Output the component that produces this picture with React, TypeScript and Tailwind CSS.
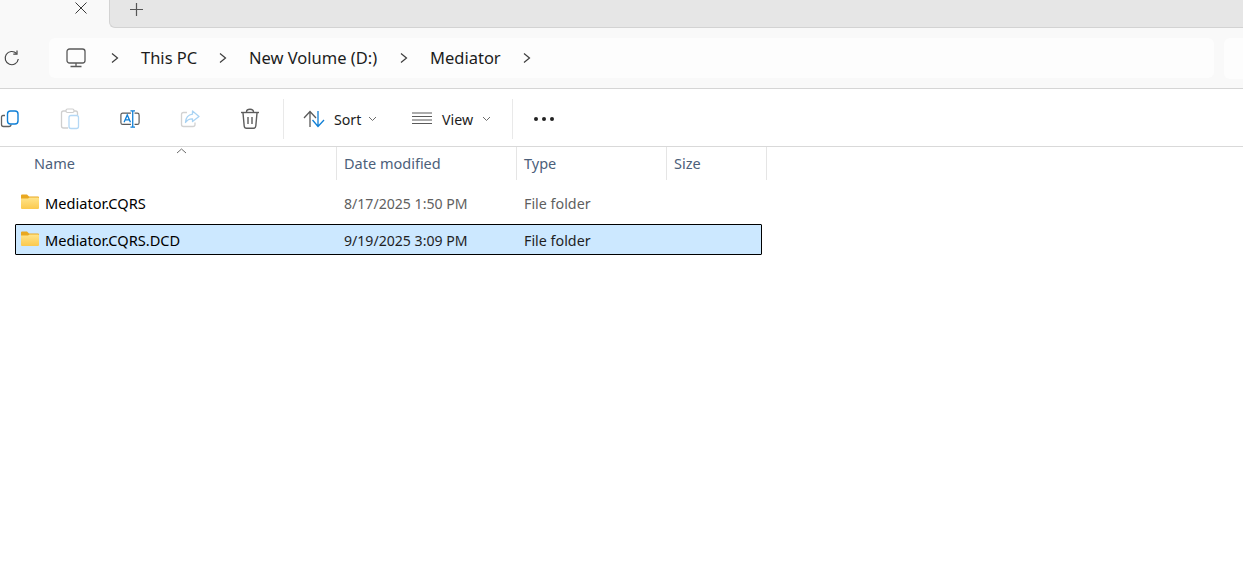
import type React from "react";

const FONT = "font-['Noto_Sans','Open_Sans',sans-serif]";

const Chevron: React.FC = () => (
  <svg width="10" height="12" viewBox="0 0 10 12" fill="none" stroke="#3c3c3c" strokeWidth="1.2">
    <path d="M2 1.5 L7.5 6 L2 10.5" />
  </svg>
);

const SmallCaret: React.FC = () => (
  <svg width="9" height="6" viewBox="0 0 9 6" fill="none" stroke="#6b6b6b" strokeWidth="1">
    <path d="M1 1 L4.5 4.5 L8 1" />
  </svg>
);

const FolderIcon: React.FC = () => (
  <svg width="20" height="16" viewBox="0 0 20 16">
    <defs>
      <linearGradient id="folderFront" x1="0" y1="0" x2="0" y2="1">
        <stop offset="0" stopColor="#ffe48a" />
        <stop offset="1" stopColor="#fbc94d" />
      </linearGradient>
    </defs>
    <path d="M1 1.5 Q1 .5 2 .5 H7 L9 2.5 H18 Q19 2.5 19 3.5 V6 H1 Z" fill="#e9a820" />
    <path d="M1 4.5 H8 L9.5 3.6 H18 Q19 3.6 19 4.6 V14 Q19 15 18 15 H2 Q1 15 1 14 Z" fill="url(#folderFront)" />
  </svg>
);

const CopyIcon: React.FC = () => (
  <svg width="20" height="20" viewBox="0 0 20 20" fill="none">
    <path d="M5 6.5 H3 Q1.5 6.5 1.5 8 V15.5 Q1.5 17.5 3.5 17.5 H9 Q11 17.5 11 15.5" stroke="#616161" strokeWidth="1.3" />
    <rect x="7.5" y="2" width="10.5" height="13" rx="3" stroke="#0f7fd6" strokeWidth="1.4" />
  </svg>
);

const PasteIcon: React.FC = () => (
  <svg width="20" height="22" viewBox="0 0 20 22" fill="none">
    <path d="M6 3 H3.5 Q1.5 3 1.5 5 V18 Q1.5 20 3.5 20 H8" stroke="#cfcfcf" strokeWidth="1.3" />
    <path d="M14 3 H15.5 Q17.5 3 17.5 5 V7" stroke="#cfcfcf" strokeWidth="1.3" />
    <rect x="6" y="1" width="8" height="3.5" rx="1.5" stroke="#cfcfcf" strokeWidth="1.2" />
    <rect x="9" y="7.5" width="9.5" height="13" rx="2" stroke="#b4d8f5" strokeWidth="1.3" />
  </svg>
);

const RenameIcon: React.FC = () => (
  <svg width="22" height="20" viewBox="0 0 22 20" fill="none">
    <path d="M12 3.5 H3 Q1 3.5 1 5.5 V14 Q1 16 3 16 H12" stroke="#5a5a5a" strokeWidth="1.3" />
    <path d="M16 3.5 H19 Q21 3.5 21 5.5 V14 Q21 16 19 16 H16" stroke="#5a5a5a" strokeWidth="1.3" />
    <path d="M4.5 13.5 L8 5.5 L11.5 13.5 M5.8 11 H10.2" stroke="#0f7fd6" strokeWidth="1.4" />
    <path d="M11.5 1 H16.5 M14 1 V19 M11.5 19 H16.5" stroke="#0f7fd6" strokeWidth="1.4" />
  </svg>
);

const ShareIcon: React.FC = () => (
  <svg width="20" height="20" viewBox="0 0 20 20" fill="none">
    <path d="M7 3.5 H3.5 Q1.5 3.5 1.5 5.5 V15.5 Q1.5 17.5 3.5 17.5 H13 Q15 17.5 15 15.5 V13.5" stroke="#d2d2d2" strokeWidth="1.3" />
    <path d="M12.5 2 L19 7.5 L12.5 12.5 V9.8 Q8 9.6 5.5 13.5 Q6 6 12.5 5.2 Z" stroke="#a9d3f3" strokeWidth="1.3" strokeLinejoin="round" />
  </svg>
);

const TrashIcon: React.FC = () => (
  <svg width="20" height="22" viewBox="0 0 20 22" fill="none" stroke="#5c5c5c" strokeWidth="1.4">
    <path d="M1 4.5 H19" />
    <path d="M6.5 4 Q6.5 1.2 10 1.2 Q13.5 1.2 13.5 4" />
    <path d="M3 5 L4.2 18 Q4.4 20.3 6.5 20.3 H13.5 Q15.6 20.3 15.8 18 L17 5" />
    <path d="M8 9 V16 M12 9 V16" />
  </svg>
);

const SortIcon: React.FC = () => (
  <svg width="22" height="18" viewBox="0 0 22 18" fill="none" strokeWidth="1.3">
    <path d="M7 17 V2 M1 8 L7 1.5 L13 8" stroke="#5a5a5a" />
    <path d="M15 1 V16 M9.5 10 L15 16.5 L21 10" stroke="#0f7fd6" />
  </svg>
);

const ViewIcon: React.FC = () => (
  <svg width="20" height="13" viewBox="0 0 20 13" fill="none" stroke="#5a5a5a" strokeWidth="1.1">
    <path d="M0 1 H20 M0 4.5 H20 M0 8 H20 M0 11.5 H20" />
  </svg>
);

const Separator: React.FC = () => <div className="h-10 w-px bg-[#e9e9e9]" />;

const columns = [
  { label: "Date modified", width: "w-[180px]" },
  { label: "Type", width: "w-[150px]" },
  { label: "Size", width: "w-[101px]" },
];

const folders = [
  { name: "Mediator.CQRS", date: "8/17/2025 1:50 PM", selected: false },
  { name: "Mediator.CQRS.DCD", date: "9/19/2025 3:09 PM", selected: true },
];

const FolderRow: React.FC<(typeof folders)[number]> = ({ name, date, selected }) => (
  <div
    className={`flex w-[747px] h-[31px] items-center rounded-[1px] border ${
      selected ? "border-black bg-[#cce8ff]" : "border-transparent"
    }`}
  >
    <div className="ml-1 w-[25px] shrink-0 -mt-[1px]">
      <FolderIcon />
    </div>
    <span className="w-[299px] shrink-0 pt-[2px] text-[14.6px] text-black">{name}</span>
    <span className={`w-[180px] shrink-0 pt-[2px] text-[14.1px] ${selected ? "text-[#1f1f1f]" : "text-[#5f5f5f]"}`}>{date}</span>
    <span className={`pt-[2px] text-[14.3px] ${selected ? "text-[#1f1f1f]" : "text-[#5f5f5f]"}`}>File folder</span>
  </div>
);

export default function App() {
  return (
    <div className={`${FONT} flex h-[572px] w-[1243px] flex-col overflow-hidden bg-white`}>
      {/* Tab strip */}
      <div className="flex h-7 shrink-0 bg-[#f9f9f9]">
        <div className="flex h-[27px] w-[109px] shrink-0 justify-end pr-[22px] pt-[2px]">
          <svg width="12" height="12" viewBox="0 0 12 12" stroke="#3a3a3a" strokeWidth="1">
            <path d="M.5 .5 L11.5 11.5 M11.5 .5 L.5 11.5" />
          </svg>
        </div>
        <div className="flex h-7 flex-1 rounded-bl-[6px] border-b border-l border-[#d3d3d3] bg-[#e6e6e6] pl-[20px] pt-[3px]">
          <svg width="13" height="13" viewBox="0 0 13 13" stroke="#555555" strokeWidth="1.2">
            <path d="M6.5 0 V13 M0 6.5 H13" />
          </svg>
        </div>
      </div>

      {/* Address bar */}
      <div className="flex h-[61px] shrink-0 items-center border-b border-[#d5d5d5] bg-[#f9f9f9]">
        <div className="flex w-[49px] shrink-0 pl-[3px]">
          <svg width="17" height="17" viewBox="0 0 17 17" fill="none" stroke="#454545" strokeWidth="1.2">
            <path d="M13.5 3.5 A6.6 6.6 0 1 0 15.3 9" />
            <path d="M14 .5 V4.2 H10.3" />
          </svg>
        </div>
        <div className="flex h-10 w-[1165px] shrink-0 items-center rounded-[6px] bg-[#fdfdfd] text-[16.5px] text-[#1c1c1c]">
          <div className="ml-[17px] flex w-[44px] shrink-0">
            <svg width="20" height="20" viewBox="0 0 20 20" fill="none" stroke="#5a5a5a" strokeWidth="1.3">
              <rect x="1" y="1" width="18" height="14" rx="2.5" />
              <path d="M10 15 V18.5 M4.5 18.5 H15.5" />
            </svg>
          </div>
          <Chevron />
          <span className="ml-[21px] w-[77px] shrink-0">This PC</span>
          <Chevron />
          <span className="ml-[21px] w-[150px] shrink-0">New Volume (D:)</span>
          <Chevron />
          <span className="ml-[21px] w-[92px] shrink-0">Mediator</span>
          <Chevron />
        </div>
        <div className="ml-[10px] h-[41px] flex-1 rounded-l-[6px] bg-[#fdfdfd]" />
      </div>

      {/* Command bar */}
      <div className="flex h-[58px] shrink-0 items-center border-b border-[#d9d9d9] pt-[2px] text-[14.2px] text-[#1c1c1c]">
        <div className="flex w-[283px] shrink-0 items-center">
          <div className="flex w-[20px] justify-center"><CopyIcon /></div>
          <div className="ml-[40px] flex w-[20px] justify-center"><PasteIcon /></div>
          <div className="ml-[40px] flex w-[20px] justify-center"><RenameIcon /></div>
          <div className="ml-[40px] flex w-[20px] justify-center"><ShareIcon /></div>
          <div className="ml-[40px] flex w-[20px] justify-center"><TrashIcon /></div>
        </div>
        <Separator />
        <div className="ml-[19px] flex w-[31px] shrink-0"><SortIcon /></div>
        <span className="w-[34px] shrink-0 pt-[2px]">Sort</span>
        <SmallCaret />
        <div className="ml-[35px] flex w-[30px] shrink-0"><ViewIcon /></div>
        <span className="w-[40px] shrink-0 pt-[2px]">View</span>
        <SmallCaret />
        <div className="ml-[21px]"><Separator /></div>
        <div className="ml-[21px] flex gap-[4px]">
          <span className="size-[4px] rounded-full bg-[#222222]" />
          <span className="size-[4px] rounded-full bg-[#222222]" />
          <span className="size-[4px] rounded-full bg-[#222222]" />
        </div>
      </div>

      {/* Column headers */}
      <div className="relative flex h-[33px] shrink-0 text-[14.5px] text-[#4c607a]">
        <div className="w-[336px] shrink-0 pl-[34px] pt-[6px]">Name</div>
        {columns.map((col) => (
          <div key={col.label} className={`${col.width} shrink-0 border-l border-[#e5e5e5] pl-[7px] pt-[6px] ${col.label === "Size" ? "border-r" : ""}`}>
            {col.label}
          </div>
        ))}
        <svg className="absolute left-[176px] top-[1px]" width="11" height="6" viewBox="0 0 11 6" fill="none" stroke="#6b6b6b" strokeWidth="1">
          <path d="M1 5 L5.5 1 L10 5" />
        </svg>
      </div>

      {/* Rows */}
      <div className="flex flex-col gap-[6px] pl-[15px] pt-[7px]">
        {folders.map((f) => (
          <FolderRow key={f.name} {...f} />
        ))}
      </div>
    </div>
  );
}
